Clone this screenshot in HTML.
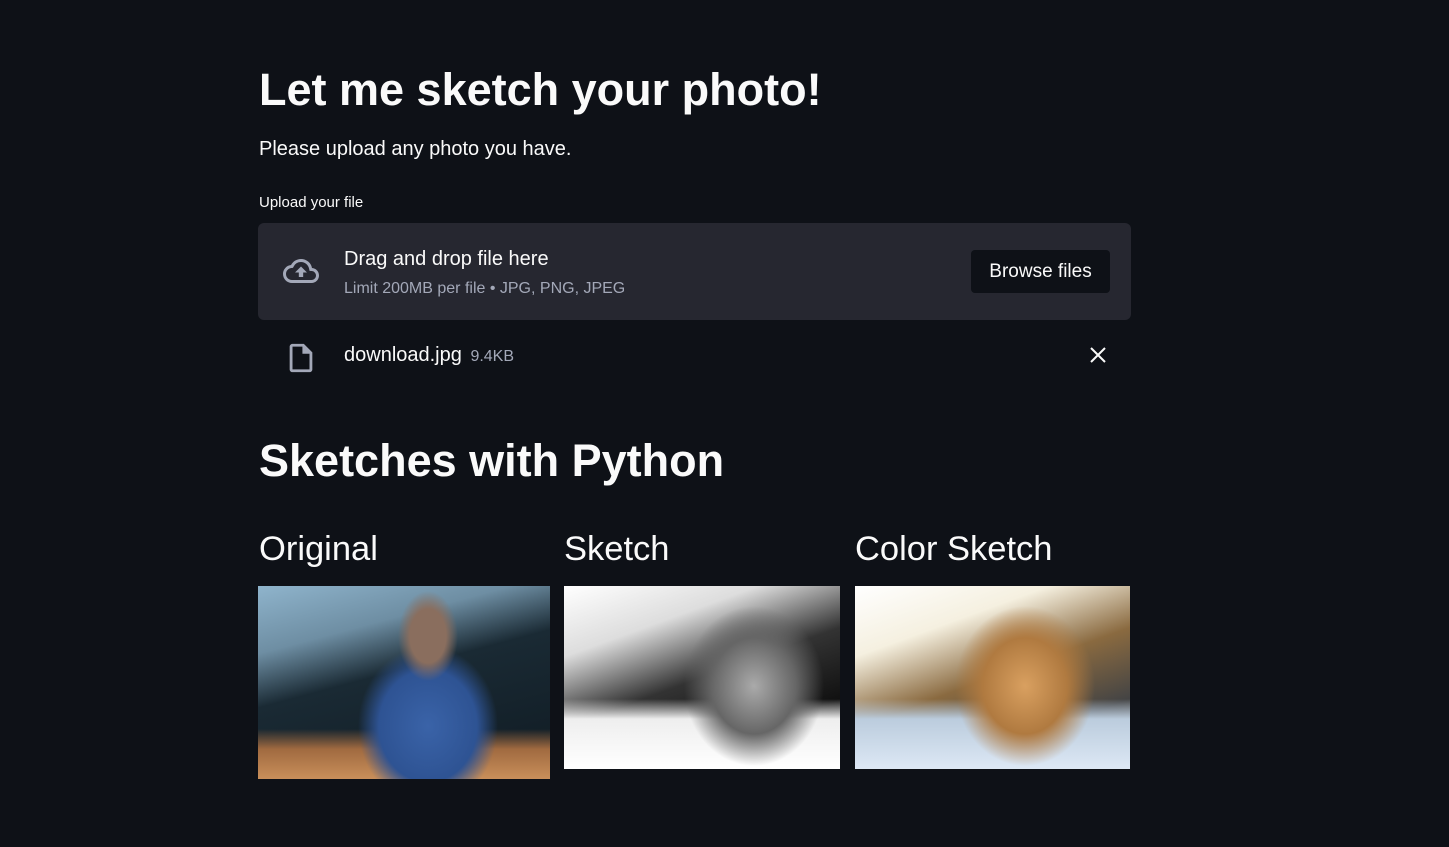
<!DOCTYPE html>
<html><head><style>
body{margin:0;background:#0e1117;width:1449px;height:847px;overflow:hidden;font-family:"Liberation Sans",sans-serif;color:#fafafa;position:relative}
.a{position:absolute;white-space:nowrap}
</style></head><body>
<div class="a" style="left:259px;top:64px;font-size:45px;font-weight:700">Let me sketch your photo!</div>
<div class="a" style="left:259px;top:138px;font-size:20px">Please upload any photo you have.</div>
<div class="a" style="left:259px;top:194px;font-size:15px">Upload your file</div>
<div class="a" style="left:258px;top:223px;width:873px;height:97px;background:#262730;border-radius:6px"></div>
<svg class="a" style="left:277px;top:253px" width="48" height="36" viewBox="0 0 24 24"><path d="M19.35 10.04A7.49 7.49 0 0 0 12 4C9.11 4 6.6 5.64 5.35 8.04A5.994 5.994 0 0 0 0 14c0 3.31 2.690 6 6 6h13c2.76 0 5-2.24 5-5 0-2.64-2.05-4.78-4.65-4.96zM19 18H6c-2.21 0-4-1.790-4-4 0-2.050 1.53-3.76 3.56-3.97l1.07-.11.5-.95A5.469 5.469 0 0 1 12 6c2.62 0 4.88 1.86 5.39 4.43l.3 1.5 1.53.11A2.98 2.98 0 0 1 22 15c0 1.65-1.35 3-3 3zM8 13h2.55v3h2.9v-3H16l-4-4z" fill="#a3a8b8"/></svg>
<div class="a" style="left:344px;top:248px;font-size:20px">Drag and drop file here</div>
<div class="a" style="left:344px;top:280px;font-size:16px;color:#a3a8b8">Limit 200MB per file • JPG, PNG, JPEG</div>
<div class="a" style="left:971px;top:250px;width:139px;height:43px;background:#0e1117;border-radius:4px;font-size:19px;line-height:43px;text-align:center">Browse files</div>
<svg class="a" style="left:284px;top:340px" width="34" height="36" viewBox="0 0 24 24"><path d="M14 2H6c-1.1 0-2 .9-2 2v16c0 1.1.9 2 2 2h12c1.1 0 2-.9 2-2V8l-6-6zM6 20V4h7v5h5v11H6z" fill="#a3a8b8"/></svg>
<div class="a" style="left:344px;top:344px;font-size:20px">download.jpg <span style="font-size:16px;color:#a3a8b8;margin-left:3px">9.4KB</span></div>
<svg class="a" style="left:1089px;top:346px" width="18" height="18" viewBox="0 0 18 18"><path d="M2 2L16 16M16 2L2 16" stroke="#fafafa" stroke-width="2"/></svg>
<div class="a" style="left:259px;top:435px;font-size:45px;font-weight:700">Sketches with Python</div>
<div class="a" style="left:259px;top:530px;font-size:34.5px">Original</div>
<div class="a" style="left:564px;top:530px;font-size:34.5px">Sketch</div>
<div class="a" style="left:855px;top:530px;font-size:34.5px">Color Sketch</div>
<div class="a" style="left:258px;top:586px;width:292px;height:193px;background:
radial-gradient(ellipse 30px 45px at 170px 50px,#8a6e5e 0,#8a6e5e 60%,transparent 100%),
radial-gradient(ellipse 70px 80px at 170px 140px,#3a63a8 0,#2e5393 70%,transparent 100%),
linear-gradient(0deg,#c98f5a 0,#a06a40 30px,transparent 50px),
linear-gradient(165deg,#8fb4cc 0,#6e8ea3 25%,#1a2a34 45%,#0f1a22 100%)"></div>
<div class="a" style="left:564px;top:586px;width:276px;height:183px;background:
radial-gradient(ellipse 70px 80px at 190px 100px,#aaa 0,#666 60%,transparent 100%),
linear-gradient(0deg,#fff 0,#eee 50px,transparent 70px),
linear-gradient(160deg,#fff 0,#ddd 25%,#333 50%,#111 75%,#555 100%)"></div>
<div class="a" style="left:855px;top:586px;width:275px;height:183px;background:
radial-gradient(ellipse 70px 80px at 170px 100px,#d9a060 0,#b07a40 60%,transparent 100%),
linear-gradient(0deg,#dde8f5 0,#bcd 50px,transparent 70px),
linear-gradient(160deg,#fff 0,#f5f0e0 25%,#8a6a40 50%,#444 75%,#777 100%)"></div>
</body></html>
